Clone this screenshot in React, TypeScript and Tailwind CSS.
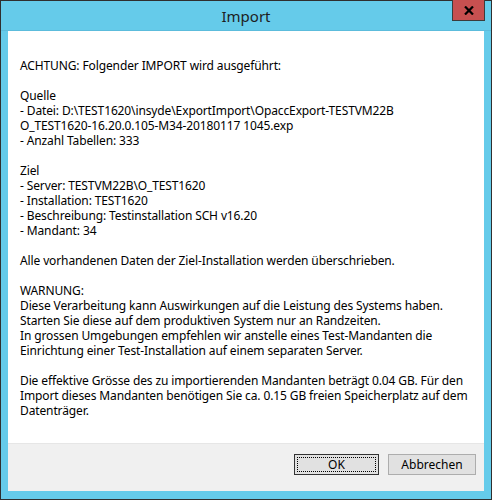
import React from "react";

const lines = [
  "ACHTUNG: Folgender IMPORT wird ausgeführt:",
  "",
  "Quelle",
  "- Datei: D:\\TEST1620\\insyde\\ExportImport\\OpaccExport-TESTVM22B",
  "O_TEST1620-16.20.0.105-M34-20180117 1045.exp",
  "- Anzahl Tabellen: 333",
  "",
  "Ziel",
  "- Server: TESTVM22B\\O_TEST1620",
  "- Installation: TEST1620",
  "- Beschreibung: Testinstallation SCH v16.20",
  "- Mandant: 34",
  "",
  "Alle vorhandenen Daten der Ziel-Installation werden überschrieben.",
  "",
  "WARNUNG:",
  "Diese Verarbeitung kann Auswirkungen auf die Leistung des Systems haben.",
  "Starten Sie diese auf dem produktiven System nur an Randzeiten.",
  "In grossen Umgebungen empfehlen wir anstelle eines Test-Mandanten die",
  "Einrichtung einer Test-Installation auf einem separaten Server.",
  "",
  "Die effektive Grösse des zu importierenden Mandanten beträgt 0.04 GB. Für den",
  "Import dieses Mandanten benötigen Sie ca. 0.15 GB freien Speicherplatz auf dem",
  "Datenträger.",
];

export default function App() {
  return (
    <div
      className="w-[492px] h-[500px] bg-[#2f2f2f] p-px"
      style={{ fontFamily: '"Noto Sans", "Open Sans", sans-serif' }}
    >
      <div className="flex flex-col w-full h-full bg-[#65cbea]">
        <div className="relative h-[30px] flex items-center justify-center border-b border-[#5cbcdc]">
          <span className="text-[15px] text-[#1e1e1e] leading-none mt-[1px]">Import</span>
          <div className="absolute right-[6px] top-[-1px] w-[33px] h-[21px] bg-[#c75050] border border-[#3c3c3c] border-t-0 flex items-center justify-center">
            <svg width="10" height="9" viewBox="0 0 10 9">
              <path d="M1 0.5 L9 8.5 M9 0.5 L1 8.5" stroke="#000" strokeWidth="2.2" />
            </svg>
          </div>
        </div>
        <div className="mx-[7px] flex flex-col">
          <div className="h-[412px] bg-white pt-[27px] pl-[12px] text-[12px] leading-[15px] tracking-[-0.12px] text-black">
            {lines.map((l, i) => (
              <div key={i} className="h-[15px] whitespace-pre">
                {l}
              </div>
            ))}
          </div>
          <div className="h-[48px] bg-[#f0f0f0] border-t border-[#e6e6e6] flex justify-end items-start pt-[10px] pr-[8px] gap-[9px]">
            <button className="w-[85px] h-[21px] bg-[#e1e1e1] border border-[#333] p-[2px] text-[12px] text-black">
              <div className="w-full h-full border border-dotted border-black flex items-center justify-center leading-none">
                OK
              </div>
            </button>
            <button className="w-[88px] h-[21px] bg-[#e1e1e1] border border-[#adadad] text-[12px] text-black flex items-center justify-center leading-none">
              Abbrechen
            </button>
          </div>
        </div>
      </div>
    </div>
  );
}
